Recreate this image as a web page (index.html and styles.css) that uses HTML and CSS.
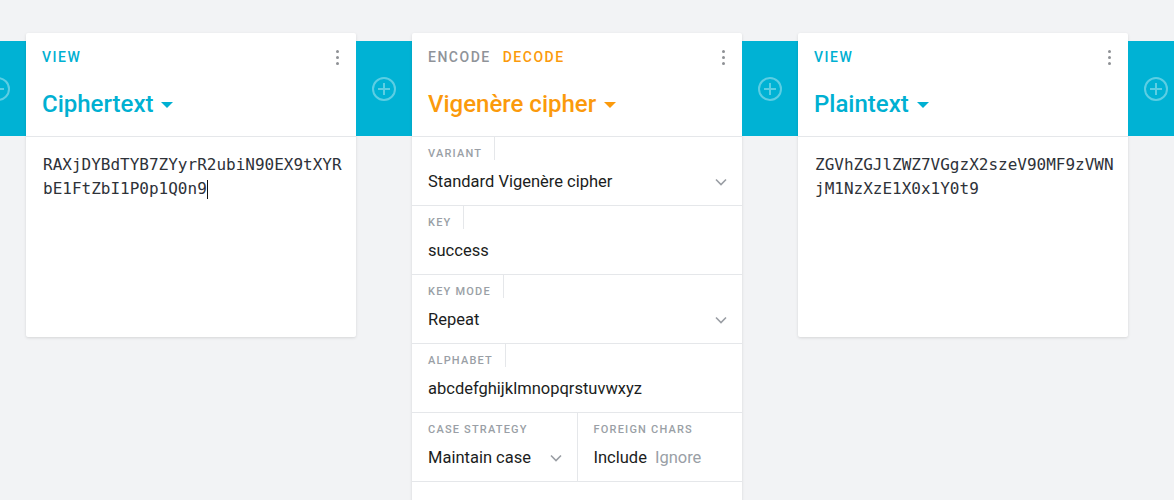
FILE: index.html
```html
<!DOCTYPE html>
<html lang="en">
<head>
<meta charset="utf-8">
<title>cryptii – Vigenère cipher</title>
<link rel="stylesheet" href="styles.css">
</head>
<body>
<div class="pipe">
  <div class="slot">
    <svg class="plus" width="26" height="26" viewBox="0 0 26 26"><circle cx="13" cy="13" r="11" /><path d="M13 7v12M7 13h12" /></svg>
  </div>

  <section class="brick brick--viewer">
    <header class="brick-header">
      <div class="brick-top">
        <div class="tabs"><span class="tab tab--view">View</span></div>
        <span class="kebab"><i></i><i></i><i></i></span>
      </div>
      <div class="brick-title title--view">Ciphertext <span class="caret"></span></div>
    </header>
    <div class="brick-text">RAXjDYBdTYB7ZYyrR2ubiN90EX9tXYRbE1FtZbI1P0p1Q0n9<span class="cursor"></span></div>
  </section>

  <div class="slot">
    <svg class="plus" width="26" height="26" viewBox="0 0 26 26"><circle cx="13" cy="13" r="11" /><path d="M13 7v12M7 13h12" /></svg>
  </div>

  <section class="brick brick--encoder">
    <header class="brick-header">
      <div class="brick-top">
        <div class="tabs"><span class="tab">Encode</span><span class="tab tab--decode">Decode</span></div>
        <span class="kebab"><i></i><i></i><i></i></span>
      </div>
      <div class="brick-title title--encoder">Vigenère cipher <span class="caret"></span></div>
    </header>

    <div class="field">
      <div class="field-label">Variant</div>
      <div class="field-value">
        <span>Standard Vigenère cipher</span>
        <svg class="chevron" width="12" height="8" viewBox="0 0 12 8"><path d="M1 1.5l5 5 5-5" /></svg>
      </div>
    </div>
    <div class="field">
      <div class="field-label">Key</div>
      <div class="field-value"><span>success</span></div>
    </div>
    <div class="field">
      <div class="field-label">Key mode</div>
      <div class="field-value">
        <span>Repeat</span>
        <svg class="chevron" width="12" height="8" viewBox="0 0 12 8"><path d="M1 1.5l5 5 5-5" /></svg>
      </div>
    </div>
    <div class="field">
      <div class="field-label">Alphabet</div>
      <div class="field-value"><span>abcdefghijklmnopqrstuvwxyz</span></div>
    </div>
    <div class="field-row">
      <div class="field field--half">
        <div class="field-label field-label--plain">Case strategy</div>
        <div class="field-value">
          <span>Maintain case</span>
          <svg class="chevron" width="12" height="8" viewBox="0 0 12 8"><path d="M1 1.5l5 5 5-5" /></svg>
        </div>
      </div>
      <div class="field field--half">
        <div class="field-label field-label--plain">Foreign chars</div>
        <div class="field-value field-value--options">
          <span>Include</span><span class="option-off">Ignore</span>
        </div>
      </div>
    </div>
    <div class="field field--empty"></div>
  </section>

  <div class="slot">
    <svg class="plus" width="26" height="26" viewBox="0 0 26 26"><circle cx="13" cy="13" r="11" /><path d="M13 7v12M7 13h12" /></svg>
  </div>

  <section class="brick brick--viewer">
    <header class="brick-header">
      <div class="brick-top">
        <div class="tabs"><span class="tab tab--view">View</span></div>
        <span class="kebab"><i></i><i></i><i></i></span>
      </div>
      <div class="brick-title title--view">Plaintext <span class="caret"></span></div>
    </header>
    <div class="brick-text">ZGVhZGJlZWZ7VGgzX2szeV90MF9zVWNjM1NzXzE1X0x1Y0t9</div>
  </section>

  <div class="slot">
    <svg class="plus" width="26" height="26" viewBox="0 0 26 26"><circle cx="13" cy="13" r="11" /><path d="M13 7v12M7 13h12" /></svg>
  </div>
</div>
</body>
</html>
```

FILE: styles.css
```css
* {
  box-sizing: border-box;
}

html, body {
  margin: 0;
  height: 100%;
  overflow: hidden;
}

body {
  background: #f2f3f5;
  font-family: Roboto, "Noto Sans", Arial, sans-serif;
  color: #1e2024;
}

.pipe {
  display: flex;
  align-items: flex-start;
  padding-top: 33px;
  margin-left: -30px;
  width: max-content;
}

.slot {
  flex: 0 0 56px;
  height: 95px;
  margin-top: 8px;
  background: #00b2d4;
  display: flex;
  align-items: center;
  justify-content: center;
}

.plus {
  display: block;
}

.plus circle,
.plus path {
  fill: none;
  stroke: rgba(255, 255, 255, 0.36);
  stroke-width: 2;
}

.brick {
  flex: 0 0 330px;
  width: 330px;
  background: #fff;
  border-radius: 2px;
  box-shadow: 0 1px 3px rgba(0, 0, 0, 0.12);
}

.brick--viewer {
  height: 304px;
}

.brick--encoder {
  min-height: 520px;
}

.brick-header {
  padding-bottom: 10px;
  border-bottom: 1px solid #e5e7ea;
}

.brick-top {
  height: 48px;
  display: flex;
  align-items: center;
  justify-content: space-between;
  padding: 0 16px 0 16px;
}

.tabs {
  display: flex;
  gap: 12px;
}

.tab {
  font-size: 14px;
  font-weight: 500;
  letter-spacing: 1.5px;
  text-transform: uppercase;
  color: #8f9399;
}

.tab--view {
  color: #00b0d2;
}

.tab--decode {
  color: #fb9a0c;
}

.kebab {
  display: flex;
  flex-direction: column;
  gap: 3px;
  padding: 0 1px;
}

.kebab i {
  display: block;
  width: 3px;
  height: 3px;
  border-radius: 50%;
  background: #8e9195;
}

.brick-title {
  height: 44px;
  margin-top: 1px;
  display: flex;
  align-items: center;
  padding: 0 16px;
  font-size: 24px;
  font-weight: 500;
  white-space: pre;
}

.title--view {
  color: #00b0d2;
}

.title--encoder {
  color: #fb9a0c;
}

.caret {
  display: inline-block;
  width: 0;
  height: 0;
  margin-left: 2px;
  margin-top: 2px;
  border-left: 6px solid transparent;
  border-right: 6px solid transparent;
  border-top: 6px solid currentColor;
}

.brick-text {
  padding: 16px 13px 16px 17px;
  font-family: "DejaVu Sans Mono", "Liberation Mono", monospace;
  font-size: 16px;
  line-height: 24px;
  color: #2e3239;
  word-break: break-all;
}

.cursor {
  display: inline-block;
  width: 1px;
  height: 19px;
  background: #111;
  vertical-align: -5px;
}

.field {
  display: flex;
  flex-direction: column;
  align-items: flex-start;
  border-bottom: 1px solid #e5e7ea;
}

.field-label {
  height: 23px;
  padding: 10px 12px 0 16px;
  border-right: 1px solid #e5e7ea;
  font-size: 11px;
  line-height: 13px;
  font-weight: 500;
  letter-spacing: 1.2px;
  text-transform: uppercase;
  color: #9a9fa6;
}

.field-label--plain {
  border-right: none;
}

.field-value {
  align-self: stretch;
  height: 45px;
  display: flex;
  align-items: center;
  justify-content: space-between;
  padding: 10px 15px 11px 16px;
  font-size: 16.5px;
  line-height: 24px;
  color: #1b1d21;
}

.field-value--options {
  justify-content: flex-start;
  gap: 8px;
}

.option-off {
  color: #9a9fa6;
}

.chevron {
  display: block;
}

.chevron path {
  fill: none;
  stroke: #9a9ea4;
  stroke-width: 1.6;
}

.field-row {
  display: flex;
  border-bottom: 1px solid #e5e7ea;
}

.field--half {
  flex: 1 1 0;
  border-bottom: none;
}

.field--half:first-child {
  border-right: 1px solid #e5e7ea;
}

.field--empty {
  height: 40px;
  border-bottom: none;
}
```
